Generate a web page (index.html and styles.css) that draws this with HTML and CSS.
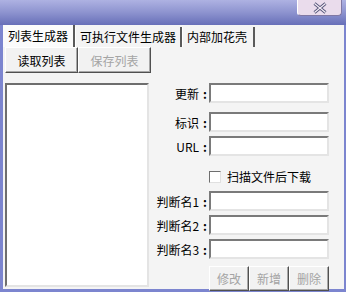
FILE: index.html
```html
<!DOCTYPE html>
<html lang="zh-CN">
<head>
    <meta charset="UTF-8">
    <title>列表生成器</title>
    <link rel="stylesheet" href="styles.css">
</head>
<body>
    <div class="window">
        <div class="titlebar">
            <div class="close-btn">
                <svg viewBox="0 0 16 12" width="16" height="12">
                    <path d="M2.5 1.5 L13.5 10.5 M13.5 1.5 L2.5 10.5" stroke="#55557a" stroke-width="3" fill="none"/>
                    <path d="M2.5 1.5 L13.5 10.5 M13.5 1.5 L2.5 10.5" stroke="#f6eef6" stroke-width="1.2" fill="none"/>
                </svg>
            </div>
        </div>

        <div class="body">
            <div class="tabs">
                <div class="tab active">列表生成器</div>
                <div class="tab">可执行文件生成器</div>
                <div class="tab">内部加花壳</div>
            </div>

            <div class="toolbar">
                <button class="btn">读取列表</button>
                <button class="btn disabled">保存列表</button>
            </div>

            <div class="content">
                <div class="listbox"></div>

                <div class="form">
                    <div class="row">
                        <label>更新<span class="colon">:</span></label>
                        <div class="input"></div>
                    </div>
                    <div class="row gap">
                        <label>标识<span class="colon">:</span></label>
                        <div class="input"></div>
                    </div>
                    <div class="row">
                        <label>URL<span class="colon">:</span></label>
                        <div class="input"></div>
                    </div>
                    <div class="check-row">
                        <span class="checkbox"></span>
                        <span>扫描文件后下载</span>
                    </div>
                    <div class="row">
                        <label>判断名1<span class="colon">:</span></label>
                        <div class="input"></div>
                    </div>
                    <div class="row">
                        <label>判断名2<span class="colon">:</span></label>
                        <div class="input"></div>
                    </div>
                    <div class="row">
                        <label>判断名3<span class="colon">:</span></label>
                        <div class="input"></div>
                    </div>
                    <div class="actions">
                        <button class="btn small disabled">修改</button>
                        <button class="btn small disabled">新增</button>
                        <button class="btn small disabled">删除</button>
                    </div>
                </div>
            </div>
        </div>
    </div>
</body>
</html>
```

FILE: styles.css
```css
* {
    margin: 0;
    padding: 0;
    box-sizing: border-box;
}

body {
    width: 346px;
    height: 292px;
    overflow: hidden;
    font-family: "Noto Sans CJK SC", "Liberation Sans", sans-serif;
    font-size: 12px;
    color: #000;
    background: #7c85cf;
}

.window {
    width: 346px;
    height: 292px;
    display: flex;
    flex-direction: column;
}

.titlebar {
    height: 25px;
    background: linear-gradient(to bottom, #aeb2e2 0%, #8d93cf 50%, #676fb8 100%);
    display: flex;
    justify-content: flex-end;
    padding-right: 4px;
}

.close-btn {
    width: 45px;
    height: 16px;
    background: #eadcec;
    border: 1px solid #ffffff;
    border-top: none;
    border-right-color: #8078a4;
    border-bottom-color: #8078a4;
    border-radius: 0 0 4px 4px;
    display: flex;
    align-items: center;
    justify-content: center;
}

.body {
    height: 264px;
    margin: 0 2px 0 3px;
    background: #f4f4f4;
    display: flex;
    flex-direction: column;
}

.tabs {
    display: flex;
    height: 22px;
}

.tab {
    height: 20px;
    margin-top: 2px;
    padding: 0 4px 0 4px;
    line-height: 19px;
    border-left: 1px solid #ffffff;
    border-right: 2px solid #5a5a5a;
}

.tab.active {
    height: 22px;
    margin-top: 0;
    line-height: 22px;
    background: #fbfbfb;
    border-left: none;
    padding: 0 5px 0 5px;
}

.tab:last-child {
    padding-right: 6px;
}

.toolbar {
    display: flex;
    padding-left: 2px;
}

.btn {
    font-family: inherit;
    font-size: 12px;
    background: #f2f2f2;
    border: 1px solid;
    border-color: #ffffff #505050 #505050 #ffffff;
    box-shadow: inset -1px -1px 0 #a8a8a8;
    width: 73px;
    height: 26px;
    color: #000;
}

.btn.disabled {
    color: #a4a4a4;
}

.content {
    display: flex;
    padding-top: 10px;
}

.listbox {
    width: 144px;
    height: 204px;
    margin-left: 2px;
    background: #fff;
    border: 2px solid;
    border-color: #6e6e6e #e4e4e4 #e4e4e4 #6e6e6e;
}

.form {
    flex: 1;
    display: flex;
    flex-direction: column;
    align-items: flex-end;
    padding-right: 15px;
}

.row {
    display: flex;
    align-items: center;
    height: 20px;
    margin-bottom: 4px;
}

.row.gap {
    margin-top: 5px;
}

.row label {
    display: flex;
    align-items: center;
}

.colon {
    font-weight: bold;
    margin: 0 2px 0 4px;
}

.input {
    width: 120px;
    height: 20px;
    background: #fff;
    border: 2px solid;
    border-color: #7a7a7a #e4e4e4 #e4e4e4 #7a7a7a;
}

.check-row {
    display: flex;
    align-items: center;
    width: 120px;
    height: 31px;
    padding-top: 2px;
}

.checkbox {
    width: 12px;
    height: 12px;
    border: 1px solid;
    border-color: #6e6e6e #e0e0e0 #e0e0e0 #6e6e6e;
    background: #fff;
    margin-right: 6px;
}

.actions {
    display: flex;
    margin-top: 3px;
}

.btn.small {
    width: 40px;
    height: 25px;
}
```
